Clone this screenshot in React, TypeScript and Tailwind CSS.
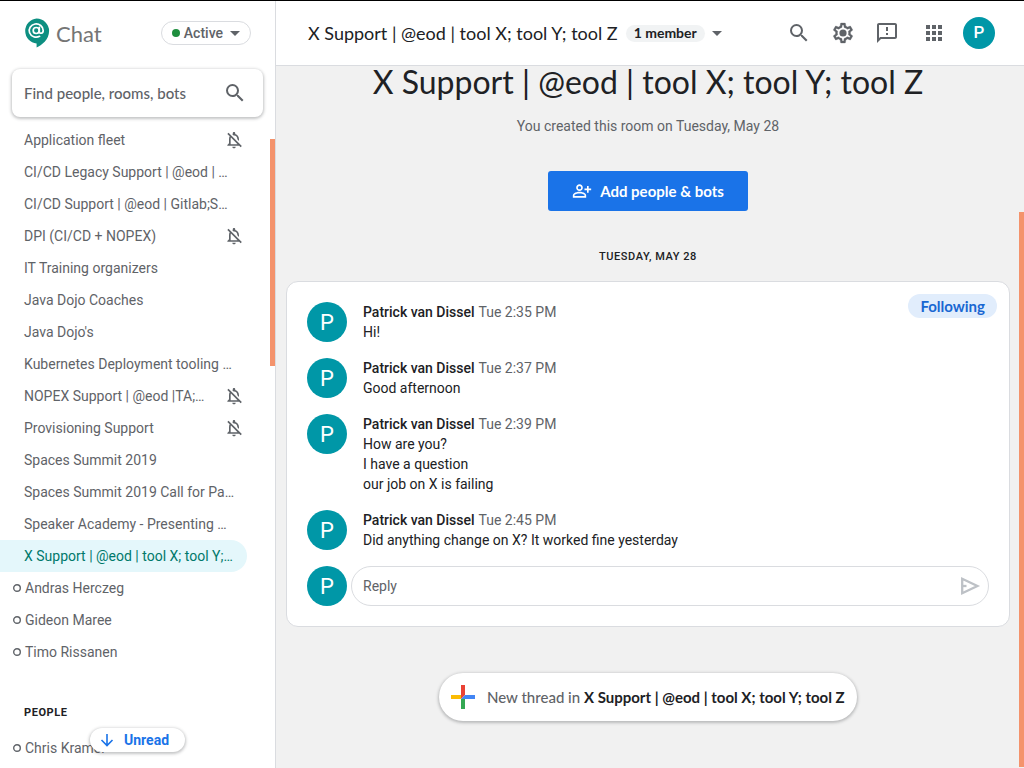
import type { ReactNode } from 'react';
import {
  MdApps,
  MdArrowDropDown,
  MdOutlineFeedback,
  MdOutlineNotificationsOff,
  MdOutlinePersonAddAlt,
  MdSearch,
} from 'react-icons/md';

const ROOM = 'X Support | @eod | tool X; tool Y; tool Z';

const rooms: { name: string; muted?: boolean; active?: boolean }[] = [
  { name: 'Application fleet', muted: true },
  { name: 'CI/CD Legacy Support | @eod | …' },
  { name: 'CI/CD Support | @eod | Gitlab;S…' },
  { name: 'DPI (CI/CD + NOPEX)', muted: true },
  { name: 'IT Training organizers' },
  { name: 'Java Dojo Coaches' },
  { name: "Java Dojo's" },
  { name: 'Kubernetes Deployment tooling …' },
  { name: 'NOPEX Support | @eod |TA;…', muted: true },
  { name: 'Provisioning Support', muted: true },
  { name: 'Spaces Summit 2019' },
  { name: 'Spaces Summit 2019 Call for Pa…' },
  { name: 'Speaker Academy - Presenting …' },
  { name: 'X Support | @eod | tool X; tool Y;…', active: true },
];

const roomBots = ['Andras Herczeg', 'Gideon Maree', 'Timo Rissanen'];

const messages = [
  { time: 'Tue 2:35 PM', lines: ['Hi!'] },
  { time: 'Tue 2:37 PM', lines: ['Good afternoon'] },
  { time: 'Tue 2:39 PM', lines: ['How are you?', 'I have a question', 'our job on X is failing'] },
  { time: 'Tue 2:45 PM', lines: ['Did anything change on X? It worked fine yesterday'] },
];

function ChatLogo() {
  return (
    <svg width="26" height="30" viewBox="0 0 26 30" aria-hidden="true">
      <path d="M12.600 0.500a12.500 12.500 0 0 0 0 24.900v4.200c5-2.600 12.500-8 12.500-16.700A12.500 12.500 0 0 0 12.600 0.500z" fill="#0d8f81" />
      <g fill="none" stroke="#fff" strokeWidth="1.700" strokeLinecap="round">
        <circle cx="12.200" cy="12.500" r="3" />
        <path d="M15.300 9.300v4.300c0 2.500 3.900 2.200 3.900-1.100a7 6.600 0 1 0-3.600 5.800" />
      </g>
    </svg>
  );
}

function GearIcon() {
  return (
    <svg width="24" height="24" viewBox="0 0 24 24" fill="currentColor" aria-hidden="true">
      <path
        stroke="currentColor"
        strokeWidth="0.300"
        d="M19.430 12.980c.04-.320.070-.640.070-.980 0-.340-.030-.660-.070-.980l2.110-1.650c.190-.150.240-.420.120-.640l-2-3.460a.5.5 0 0 0-.610-.220l-2.490 1c-.520-.400-1.080-.730-1.690-.980l-.380-2.650A.488.488 0 0 0 14 2h-4c-.250 0-.460.180-.490.420l-.380 2.650c-.610.250-1.170.590-1.690.980l-2.490-1a.5.5 0 0 0-.610.220l-2 3.460c-.130.220-.070.490.120.640l2.110 1.650c-.040.320-.070.650-.070.980 0 .330.030.660.070.980l-2.110 1.650c-.190.150-.240.420-.120.640l2 3.460a.5.5 0 0 0 .610.220l2.490-1c.520.400 1.080.730 1.690.980l.380 2.650c.030.240.240.420.490.420h4c.250 0 .460-.180.490-.420l.380-2.650c.610-.250 1.170-.590 1.690-.980l2.490 1a.5.5 0 0 0 .610-.220l2-3.460c.120-.220.070-.490-.120-.640l-2.110-1.650zm-1.980-1.710c.040.310.050.520.050.730 0 .210-.020.430-.050.730l-.140 1.130.89.700 1.080.840-.700 1.210-1.270-.510-1.040-.420-.900.680c-.430.320-.840.560-1.250.730l-1.060.430-.160 1.130-.200 1.350h-1.400l-.190-1.350-.160-1.130-1.060-.430c-.430-.180-.830-.410-1.230-.710l-.910-.700-1.060.430-1.270.510-.700-1.210 1.080-.840.890-.700-.140-1.130c-.030-.310-.050-.540-.050-.740s.020-.430.050-.730l.140-1.130-.890-.700-1.080-.840.700-1.210 1.270.510 1.040.420.900-.680c.430-.320.840-.560 1.250-.730l1.060-.430.160-1.130.200-1.350h1.390l.190 1.350.160 1.130 1.060.430c.430.180.830.410 1.230.710l.910.700 1.060-.430 1.270-.510.700 1.210-1.070.850-.890.700.140 1.130z"
      />
      <circle cx="12" cy="12" r="3.600" />
    </svg>
  );
}

function SendIcon() {
  return (
    <svg width="24" height="24" viewBox="0 0 24 24" fill="none" stroke="currentColor" strokeWidth="2.300" aria-hidden="true">
      <path d="M4.200 4.800v14.400L19.400 12z" />
      <path d="M4 12h4.500" />
    </svg>
  );
}

function PlusIcon() {
  return (
    <svg width="24" height="24" viewBox="0 0 24 24" aria-hidden="true">
      <path d="M10 0h4v10l-4 4z" fill="#ea4335" />
      <path d="M0 10h10v4H0z" fill="#fbbc04" />
      <path d="M14 10h10v4H10z" fill="#4285f4" />
      <path d="M10 14h4v10h-4z" fill="#34a853" />
    </svg>
  );
}

function Avatar() {
  return (
    <div className="flex size-10 shrink-0 items-center justify-center rounded-full bg-[#0097a7] text-[22px] text-white">P</div>
  );
}

function IconButton({ label, children }: { label: string; children: ReactNode }) {
  return (
    <button type="button" aria-label={label} className="text-[#5f6368]">
      {children}
    </button>
  );
}

function Person({ name }: { name: string }) {
  return (
    <li>
      <a href="#" className="flex h-8 items-center gap-1 pl-[13px]">
        <svg width="8" height="8" viewBox="0 0 8 8" fill="none" stroke="#5f6368" strokeWidth="1.400" aria-hidden="true">
          <circle cx="4" cy="4" r="3.300" />
        </svg>
        <span>{name}</span>
      </a>
    </li>
  );
}

function Sidebar() {
  return (
    <aside className="relative flex w-[276px] shrink-0 flex-col overflow-hidden border-r border-[#dadce0] bg-white">
      <div className="mb-1 flex h-16 shrink-0 items-center pr-6 pl-6">
        <ChatLogo />
        <span className="ml-1.5 font-[Lato] text-[22px] text-[#757575]">Chat</span>
        <button type="button" className="ml-auto flex h-6 items-center rounded-full border border-[#dadce0] pr-[3px] pl-2.5 text-sm font-medium text-[#5f6368]">
          <span className="mr-1 size-2 rounded-full bg-[#1e8e3e]" />
          Active
          <MdArrowDropDown size={24} />
        </button>
      </div>
      <div className="mx-3 flex h-12 shrink-0 items-center rounded-lg bg-white pr-4 pl-3 shadow-[0_1px_3px_1px_rgba(60,64,67,0.3)]">
        <input
          aria-label="Find people, rooms, bots"
          placeholder="Find people, rooms, bots"
          className="min-w-0 flex-1 bg-transparent font-[Lato] text-[15px] font-medium outline-none placeholder:text-[#5f6368]"
        />
        <IconButton label="Search">
          <MdSearch size={24} />
        </IconButton>
      </div>
      <div className="flex min-h-0 flex-1 pt-[7px]">
        <nav className="min-w-0 flex-1 overflow-hidden text-sm text-[#5f6368]">
          <ul>
            {rooms.map((room) => (
              <li key={room.name}>
                <a
                  href="#"
                  className={
                    room.active
                      ? 'mr-[23px] flex h-8 items-center rounded-r-full bg-[#e4f7fb] pl-6 whitespace-nowrap text-[#00796b]'
                      : 'mr-[23px] flex h-8 items-center pl-6 whitespace-nowrap'
                  }
                >
                  <span className="flex-1">{room.name}</span>
                  {room.muted && <MdOutlineNotificationsOff size={20} className="mr-[3px]" />}
                </a>
              </li>
            ))}
            {roomBots.map((name) => (
              <Person key={name} name={name} />
            ))}
          </ul>
          <h2 className="mt-[29px] flex h-8 items-center pl-6 text-[11px] font-bold tracking-wider text-[#202124]">PEOPLE</h2>
          <ul className="mt-[3px]">
            <Person name="Chris Kramer" />
          </ul>
        </nav>
        <div className="w-[5px] pt-[15px]">
          <div className="h-[227px] bg-[#f4936c]" />
        </div>
      </div>
      <button
        type="button"
        className="absolute bottom-4 left-[90px] flex h-6 items-center gap-2 rounded-full bg-white pr-4 pl-2 text-sm font-bold text-[#1a73e8] shadow-[0_1px_3px_1px_rgba(60,64,67,0.3)]"
      >
        <svg width="18" height="18" viewBox="0 0 18 18" fill="none" stroke="currentColor" strokeWidth="1.600" aria-hidden="true">
          <path d="M9 3v11.500M3.500 9L9 14.500 14.500 9" />
        </svg>
        Unread
      </button>
    </aside>
  );
}

function TopBar() {
  return (
    <header className="flex h-[65px] shrink-0 items-center border-b border-[#dadce0] bg-white pr-[29px] pl-8">
      <span className="font-[Lato] text-lg text-[#202124]">{ROOM}</span>
      <button type="button" aria-label="Room menu" className="ml-2 flex items-center text-[#5f6368]">
        <span className="flex h-[17px] items-center rounded-full bg-[#f1f3f4] px-2 font-[Lato] text-sm font-bold text-[#202124]">1 member</span>
        <MdArrowDropDown size={24} />
      </button>
      <div className="ml-auto flex items-center gap-[23px]">
        <div className="flex items-center gap-5">
          <IconButton label="Search in room">
            <MdSearch size={24} />
          </IconButton>
          <IconButton label="Settings">
            <GearIcon />
          </IconButton>
          <IconButton label="Send feedback">
            <MdOutlineFeedback size={24} />
          </IconButton>
        </div>
        <div className="flex items-center gap-[17px]">
          <IconButton label="Google apps">
            <MdApps size={24} />
          </IconButton>
          <button type="button" aria-label="Account" className="flex size-8 items-center justify-center rounded-full bg-[#0097a7] text-[17px] font-medium text-white">
            P
          </button>
        </div>
      </div>
    </header>
  );
}

function Thread() {
  return (
    <section className="relative mt-4 rounded-xl border border-[#dadce0] bg-white p-5">
      <button type="button" className="absolute top-3 right-3 h-6 rounded-full bg-[#e1edfc] px-3 font-[Lato] text-[15px] leading-6 font-bold text-[#1967d2]">
        Following
      </button>
      <div className="flex flex-col gap-4">
        {messages.map((message) => (
          <article key={message.time} className="flex gap-4">
            <Avatar />
            <div className="text-sm text-[#202124]">
              <p className="flex gap-1">
                <span className="font-medium">Patrick van Dissel</span>
                <time className="text-[#5f6368]">{message.time}</time>
              </p>
              {message.lines.map((line) => (
                <p key={line}>{line}</p>
              ))}
            </div>
          </article>
        ))}
      </div>
      <div className="mt-4 flex gap-1">
        <Avatar />
        <div className="flex h-10 flex-1 items-center rounded-full border border-[#dadce0] pr-1.5 pl-[11px]">
          <input aria-label="Reply" placeholder="Reply" className="min-w-0 flex-1 bg-transparent text-sm outline-none placeholder:text-[#5f6368]" />
          <button type="button" aria-label="Send" className="text-[#bdc1c6]">
            <SendIcon />
          </button>
        </div>
      </div>
    </section>
  );
}

export default function App() {
  return (
    <div className="flex h-screen overflow-hidden border-t border-black bg-[#f1f1f1] font-[Roboto,sans-serif]">
      <Sidebar />
      <div className="flex min-w-0 flex-1 flex-col">
        <TopBar />
        <div className="flex min-h-0 flex-1">
          <main className="min-w-0 flex-1 pr-[9px] pl-2.5 text-center">
            <h1 className="font-[Lato] text-[32px] leading-8 text-[#202124]">{ROOM}</h1>
            <p className="mt-[18px] text-sm text-[#5f6368]">You created this room on Tuesday, May 28</p>
            <button type="button" className="mt-[35px] inline-flex h-10 items-center gap-2 rounded-[3px] bg-[#1a73e8] px-6 font-[Lato] text-[15px] font-bold text-white">
              <MdOutlinePersonAddAlt size={20} />
              Add people &amp; bots
            </button>
            <h2 className="mt-[38px] text-[11px] leading-4 font-medium tracking-wider text-[#202124]">TUESDAY, MAY 28</h2>
            <div className="text-left">
              <Thread />
            </div>
            <button
              type="button"
              className="mt-[46px] inline-flex h-12 min-w-[418px] items-center gap-3 rounded-full bg-white px-3 font-[Lato] text-[15px] shadow-[0_1px_3px_1px_rgba(60,64,67,0.3)]"
            >
              <PlusIcon />
              <span className="font-medium text-[#5f6368]">
                New thread in <span className="font-bold text-[#202124]">{ROOM}</span>
              </span>
            </button>
          </main>
          <div className="flex w-[5px] flex-col pt-[146px] pb-px">
            <div className="flex-1 bg-[#f4936c]" />
          </div>
        </div>
      </div>
    </div>
  );
}
